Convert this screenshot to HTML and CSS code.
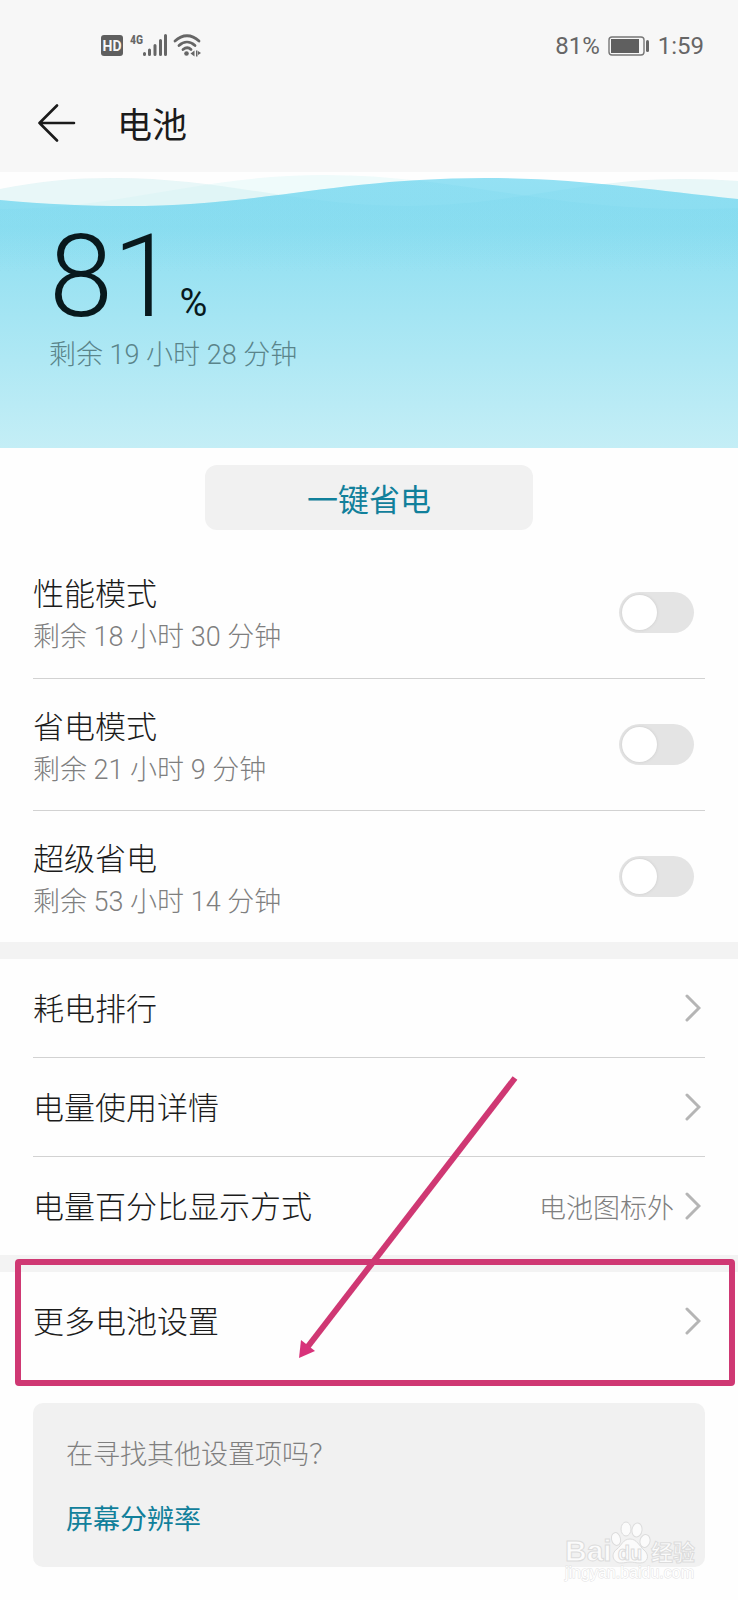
FILE: index.html
```html
<!DOCTYPE html>
<html lang="zh-CN">
<head>
<meta charset="utf-8">
<meta name="viewport" content="width=device-width, initial-scale=1">
<title>电池</title>
<link rel="stylesheet" href="styles.css">
</head>
<body>
<header class="header">
  <div class="status">
    <svg class="status-icons" width="102" height="30" viewBox="0 0 102 30" aria-hidden="true">
      <rect x="1" y="4" width="22" height="21" rx="3" fill="#5f5f5f"/>
      <text class="hd" x="12" y="20" text-anchor="middle">HD</text>
      <text class="net" x="30" y="13">4G</text>
      <g stroke="#666" stroke-width="3" stroke-linecap="round">
        <path d="M44.500 23.500v-1M49.500 23.500v-4.500M55 23.500v-9M60.500 23.500v-14M65.500 23.500v-19"/>
      </g>
      <g fill="none" stroke="#666" stroke-width="2.800" stroke-linecap="round">
        <path d="M75 10c7.500-7 16.500-7 24 0M79 14.500c5-4.500 11-4.500 16 0M83 18.500c3-2.500 5.500-2.500 8 0"/>
      </g>
      <circle cx="86.500" cy="22.500" r="2.300" fill="#666"/>
      <path d="M94.500 19.500v6l-4-3zM96 19.500h1.500v6H96zM98 20l3 2-3 2z" fill="#666"/>
    </svg>
    <div class="status-right">
      <span>81%</span>
      <svg width="42" height="20" viewBox="0 0 42 20" aria-hidden="true">
        <rect x="1" y="1" width="35" height="18" rx="3" fill="none" stroke="#777" stroke-width="1.400"/>
        <rect x="3" y="3" width="28" height="14" fill="#5f5f5f"/>
        <rect x="38" y="4" width="3" height="12" rx="1.500" fill="#666"/>
      </svg>
      <span>1:59</span>
    </div>
  </div>
  <div class="titlebar">
    <button class="back" type="button" aria-label="返回">
      <svg width="38" height="38" viewBox="0 0 38 38" fill="none" stroke="#1b1b1b" stroke-width="2.600" stroke-linecap="round" stroke-linejoin="round" aria-hidden="true"><path d="M19 1.500L1.500 19 19 36.500M1.500 19H36"/></svg>
    </button>
    <h1 class="title">电池</h1>
  </div>
</header>

<main>
  <section class="hero">
    <svg class="waves" viewBox="0 0 738 276" preserveAspectRatio="none" aria-hidden="true">
      <defs>
        <linearGradient id="water" x1="0" y1="0" x2="0" y2="276" gradientUnits="userSpaceOnUse">
          <stop offset="0" stop-color="#95e1f4"/>
          <stop offset=".2" stop-color="#8fdff1"/>
          <stop offset="1" stop-color="#c4eef6"/>
        </linearGradient>
        <linearGradient id="tint" x1="0" y1="0" x2="0" y2="100" gradientUnits="userSpaceOnUse">
          <stop offset="0" stop-color="#70d3eb" stop-opacity=".2"/>
          <stop offset=".3" stop-color="#70d3eb" stop-opacity=".16"/>
          <stop offset="1" stop-color="#70d3eb" stop-opacity="0"/>
        </linearGradient>
        <path id="w1" d="M0 28C45 32 85 34 127 34C260 34 340 6 485 6C580 6 650 18 738 27V276H0Z"/>
        <path id="w2" d="M0 17C40 9 75 6 113 6C225 6 300 34 405 34C510 34 580 7 683 7Q712 7 738 9V276H0Z"/>
        <path id="w3" d="M0 37C120 37 200 3 325 3C450 3 550 37 683 37Q712 37 738 36V276H0Z"/>
        <clipPath id="crest"><use href="#w1"/></clipPath>
      </defs>
      <use href="#w3" fill="#effbfb"/>
      <use href="#w2" fill="#d2f0f1" fill-opacity=".5"/>
      <use href="#w1" fill="url(#water)"/>
      <g clip-path="url(#crest)" fill="url(#tint)">
        <use href="#w2"/>
        <use href="#w3"/>
      </g>
    </svg>
    <p class="level"><span class="level-number">81</span><span class="level-unit">%</span></p>
    <p class="remaining">剩余 19 小时 28 分钟</p>
  </section>

  <div class="action">
    <button class="save" type="button">一键省电</button>
  </div>

  <section class="modes">
    <div class="row mode">
      <label class="mode-label" for="performance"><span class="name">性能模式</span><span class="note">剩余 18 小时 30 分钟</span></label>
      <input class="switch" id="performance" type="checkbox" role="switch">
    </div>
    <div class="row mode">
      <label class="mode-label" for="saving"><span class="name">省电模式</span><span class="note">剩余 21 小时 9 分钟</span></label>
      <input class="switch" id="saving" type="checkbox" role="switch">
    </div>
    <div class="row mode">
      <label class="mode-label" for="ultra"><span class="name">超级省电</span><span class="note">剩余 53 小时 14 分钟</span></label>
      <input class="switch" id="ultra" type="checkbox" role="switch">
    </div>
  </section>

  <nav class="links">
    <div class="group">
      <a class="row link" href="#ranking"><span class="name">耗电排行</span><svg class="chevron" viewBox="0 0 16 28" aria-hidden="true"><path d="M2 2l12 12L2 26"/></svg></a>
      <a class="row link" href="#usage"><span class="name">电量使用详情</span><svg class="chevron" viewBox="0 0 16 28" aria-hidden="true"><path d="M2 2l12 12L2 26"/></svg></a>
      <a class="row link" href="#percent"><span class="name">电量百分比显示方式</span><span class="value">电池图标外</span><svg class="chevron" viewBox="0 0 16 28" aria-hidden="true"><path d="M2 2l12 12L2 26"/></svg></a>
    </div>
    <div class="group more">
      <a class="row link" href="#more"><span class="name">更多电池设置</span><svg class="chevron" viewBox="0 0 16 28" aria-hidden="true"><path d="M2 2l12 12L2 26"/></svg></a>
      <div class="marker"></div>
      <svg class="arrow" viewBox="0 0 226 288" aria-hidden="true">
        <path d="M219 5L10 276" fill="none" stroke="#cf3873" stroke-width="6"/>
        <path d="M3 285L5 267 19 278Z" fill="#d8327a"/>
      </svg>
    </div>
  </nav>

  <aside class="card">
    <p class="question">在寻找其他设置项吗？</p>
    <a class="suggestion" href="#resolution">屏幕分辨率</a>
    <svg class="watermark" viewBox="0 0 140 70" aria-hidden="true">
      <g fill="#fbfbfb" stroke="#dcdcdc" stroke-width="1">
        <text class="wm-latin" x="3" y="44">Bai</text>
        <ellipse cx="54" cy="22" rx="4.500" ry="6.500" transform="rotate(-12 54 22)"/>
        <ellipse cx="64" cy="12" rx="5" ry="7"/>
        <ellipse cx="75" cy="13" rx="5" ry="7" transform="rotate(8 75 13)"/>
        <ellipse cx="83" cy="24" rx="5" ry="6.500" transform="rotate(15 83 24)"/>
        <path d="M68 22C61 22 60 28 55 32C48 37 51 46 59 46C63 46 65 45 68 45C71 45 74 46 78 46C86 46 88 38 82 33C77 29 75 22 68 22Z"/>
        <text class="wm-du" x="68" y="43" text-anchor="middle">du</text>
        <text class="wm-cjk" x="89" y="43">经验</text>
      </g>
      <text class="wm-url" x="3" y="61">jingyan.baidu.com</text>
    </svg>
  </aside>
</main>
</body>
</html>
```
FILE: styles.css
```css
* {
  box-sizing: border-box;
}

body {
  margin: 0;
  background: #fefefe;
  color: #1b1b1b;
  font-family: Roboto, "Noto Sans CJK SC", sans-serif;
  font-size: 31px;
  font-weight: 300;
}

h1,
p {
  margin: 0;
}

a {
  color: inherit;
  text-decoration: none;
}

button {
  border: 0;
  padding: 0;
  font: inherit;
  cursor: pointer;
}

.header {
  height: 172px;
  background: #f7f7f7;
}

.status {
  display: flex;
  align-items: center;
  justify-content: space-between;
  height: 76px;
  padding: 16px 34px 0 100px;
  color: #666;
  font-size: 24px;
  font-weight: 400;
}

.status-right {
  display: flex;
  align-items: center;
  gap: 8px;
}

.hd {
  fill: #f7f7f7;
  font-size: 14px;
  font-weight: 700;
}

.net {
  fill: #666;
  font-family: "Roboto Condensed", Roboto, sans-serif;
  font-size: 12px;
  font-weight: 700;
}

.titlebar {
  display: flex;
  align-items: center;
  gap: 41px;
  height: 94px;
  padding: 0 38px;
}

.back {
  display: flex;
  background: none;
}

.title {
  padding-top: 7px;
  font-size: 35px;
  font-weight: 400;
  line-height: 48px;
}

.hero {
  position: relative;
  height: 276px;
  padding: 49px 49px 0;
}

.waves {
  position: absolute;
  inset: 0;
  width: 100%;
  height: 100%;
}

.level {
  position: relative;
  display: flex;
  align-items: baseline;
  gap: 3px;
  height: 114px;
  color: #08191d;
  line-height: 112px;
}

.level-number {
  font-size: 115px;
}

.level-unit {
  font-size: 38px;
  font-weight: 400;
}

.remaining {
  position: relative;
  color: #5a848a;
  font-size: 27px;
  line-height: 40px;
}

.action {
  display: flex;
  justify-content: center;
  padding: 17px 33px 16px;
}

.save {
  width: 328px;
  height: 65px;
  border-radius: 12px;
  background: #f1f1f1;
  color: #11809b;
  font-size: 31px;
  font-weight: 400;
}

.row {
  display: flex;
  align-items: center;
  margin: 0 33px;
}

.row + .row {
  border-top: 1px solid #d2d2d2;
}

.mode {
  height: 132px;
  padding-right: 11px;
}

.mode-label {
  display: flex;
  flex: 1;
  flex-direction: column;
  padding-top: 6px;
}

.name {
  line-height: 44px;
}

.note {
  color: #7f7f7f;
  font-size: 27px;
  line-height: 40px;
}

.switch {
  width: 75px;
  height: 41px;
  margin: 0;
  border-radius: 21px;
  background: #e4e4e4;
  appearance: none;
}

.switch::before {
  display: block;
  width: 35px;
  height: 35px;
  margin: 3px;
  border-radius: 50%;
  background: #fff;
  box-shadow: 0 0 3px #c8c8c8;
  content: "";
}

.switch:checked {
  background: #11809b;
}

.switch:checked::before {
  margin-left: 37px;
}

.group {
  border-top: 17px solid #f3f3f3;
}

.link {
  box-sizing: content-box;
  height: 98px;
}

.link .name {
  flex: 1;
  padding-top: 4px;
}

.value {
  margin-right: 11px;
  color: #7f7f7f;
  font-size: 27px;
}

.chevron {
  width: 16px;
  height: 28px;
  margin-right: 4px;
  fill: none;
  stroke: #b5b5b5;
  stroke-linecap: round;
  stroke-width: 3;
}

.more {
  position: relative;
}

.marker {
  position: absolute;
  top: -13px;
  right: 3px;
  bottom: -16px;
  left: 15px;
  border: 6px solid #cf3873;
  border-radius: 4px;
}

.arrow {
  position: absolute;
  right: 216px;
  bottom: 9px;
  width: 226px;
  height: 288px;
}

.card {
  position: relative;
  margin: 33px;
  padding: 32px 33px 26px;
  border-radius: 10px;
  background: #f1f1f1;
}

.question {
  color: #7f7f7f;
  font-size: 27px;
  line-height: 41px;
}

.suggestion {
  display: inline-block;
  margin-top: 24px;
  color: #11809b;
  font-size: 27px;
  font-weight: 400;
  line-height: 41px;
}

.watermark {
  position: absolute;
  right: 3px;
  bottom: -20px;
  width: 140px;
  height: 70px;
}

.wm-latin {
  font-family: "Liberation Sans", sans-serif;
  font-size: 30px;
  font-weight: 700;
}

.wm-du {
  font-family: "Liberation Sans", sans-serif;
  font-size: 20px;
  font-weight: 700;
}

.wm-cjk {
  font-family: "Noto Sans CJK SC", sans-serif;
  font-size: 22px;
  font-weight: 700;
}

.wm-url {
  fill: #fff;
  stroke: #e2e2e2;
  stroke-width: 1;
  paint-order: stroke;
  font-family: "Liberation Sans", sans-serif;
  font-size: 16px;
  font-weight: 400;
}
```
